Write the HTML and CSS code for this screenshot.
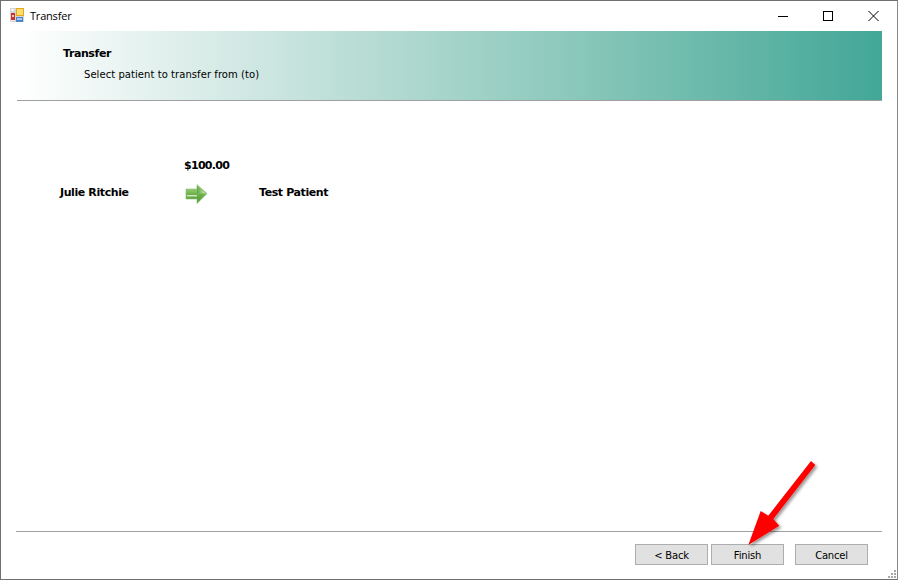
FILE: index.html
```html
<!DOCTYPE html>
<html lang="en">
<head>
<meta charset="utf-8">
<title>Transfer</title>
<link rel="stylesheet" href="styles.css">
</head>
<body>
<div class="window">
  <div class="titlebar">
    <svg class="app-icon" width="14" height="14" viewBox="0 0 14 14">
      <rect x="0" y="0" width="14" height="14" fill="#d4d4d4"/>
      <rect x="1" y="1" width="3" height="2" fill="#f4f4f4"/>
      <rect x="1" y="10" width="3" height="3" fill="#f4f4f4"/>
      <rect x="1" y="5" width="4" height="7" fill="#c8322a"/>
      <rect x="2" y="7" width="2" height="2" fill="#f2c9b8"/>
      <rect x="6" y="0" width="8" height="8" fill="#e8a818"/>
      <rect x="7" y="1" width="6" height="6" fill="#fbdc72"/>
      <rect x="6" y="9" width="7" height="5" fill="#4f83cc"/>
      <rect x="7" y="10" width="5" height="2" fill="#a9c8ee"/>
    </svg>
    <span class="title">Transfer</span>
    <div class="controls">
      <svg width="12" height="12" viewBox="0 0 12 12"><path d="M1 6.5h10" stroke="#000" fill="none"/></svg>
      <svg width="12" height="12" viewBox="0 0 12 12"><rect x="1.5" y="1.5" width="9" height="9" stroke="#000" fill="none"/></svg>
      <svg width="12" height="12" viewBox="0 0 12 12"><path d="M1.5 1l10 10M11.5 1l-10 10" stroke="#000" fill="none"/></svg>
    </div>
  </div>
  <div class="banner">
    <div class="banner-title">Transfer</div>
    <div class="banner-sub">Select patient to transfer from (to)</div>
  </div>
  <main class="content">
    <div class="transfer">
      <span></span>
      <span class="amount">$100.00</span>
      <span></span>
      <span class="name from">Julie Ritchie</span>
      <svg class="arrow" width="23" height="20" viewBox="0 0 23 20">
        <defs>
          <linearGradient id="ag" x1="0" y1="0" x2="0" y2="1">
            <stop offset="0" stop-color="#b5dc98"/>
            <stop offset="0.5" stop-color="#6fb24d"/>
            <stop offset="1" stop-color="#4f9638"/>
          </linearGradient>
          <linearGradient id="ah" x1="0" y1="0" x2="1" y2="0">
            <stop offset="0" stop-color="#5fa83f"/>
            <stop offset="1" stop-color="#cfe8bd"/>
          </linearGradient>
        </defs>
        <path d="M1 5h11V0.5L22 9.5 12 19.5V15H1z" fill="url(#ag)" stroke="#8dbf72" stroke-width="0.6"/>
        <path d="M12 1.5L21 9.5H12z" fill="url(#ah)"/>
        <rect x="2" y="11" width="10" height="1.5" fill="#cbe8b6"/>
      </svg>
      <span class="name">Test Patient</span>
    </div>
  </main>
  <footer class="footer">
    <button class="btn">&lt; Back</button>
    <button class="btn">Finish</button>
    <button class="btn cancel">Cancel</button>
    <svg class="grip" width="10" height="10" viewBox="0 0 10 10" fill="#a8a8a8">
      <rect x="7" y="1" width="2" height="2"/><rect x="4" y="4" width="2" height="2"/><rect x="7" y="4" width="2" height="2"/>
      <rect x="1" y="7" width="2" height="2"/><rect x="4" y="7" width="2" height="2"/><rect x="7" y="7" width="2" height="2"/>
    </svg>
  </footer>
  <svg class="callout" width="80" height="95" viewBox="0 0 80 95">
    <defs>
      <filter id="sh" x="-20%" y="-20%" width="150%" height="150%">
        <feDropShadow dx="2" dy="2" stdDeviation="1.5" flood-color="#000" flood-opacity="0.4"/>
      </filter>
    </defs>
    <path d="M65 2L69.3 6 27.3 60 33.3 66.7 2.3 86 14.7 52 22.3 56.7z" fill="#ff0000" filter="url(#sh)"/>
  </svg>
</div>
</body>
</html>
```
FILE: styles.css
```css
* { box-sizing: border-box; }
html, body { margin: 0; padding: 0; }
body { width: 898px; height: 580px; overflow: hidden; background: #fff; }
.window {
  position: relative;
  width: 898px;
  height: 580px;
  display: flex;
  flex-direction: column;
  background: #fff;
  border: 1px solid #6f6f6f;
  border-right-color: #8a8a8a;
  font-family: "DejaVu Sans", sans-serif;
  color: #000;
}
.titlebar {
  height: 30px;
  flex: none;
  display: flex;
  align-items: center;
  padding-left: 9px;
}
.app-icon { flex: none; margin-top: -2px; }
.title { margin: -2px 0 0 6px; font: 11px "Open Sans", "Noto Sans", sans-serif; letter-spacing: -0.2px; }
.controls {
  margin-left: auto;
  display: flex;
  gap: 33px;
  padding-right: 18px;
  align-items: center;
}
.banner {
  flex: none;
  margin: 0 15px 0 16px;
  height: 70px;
  padding: 16px 0 0 46px;
  background: linear-gradient(90deg, #fff 0%, #c5e2dc 33%, #8fcabd 62%, #42a797 100%);
  border-bottom: 1px solid #a0a0a0;
}
.banner-title { font: bold 11px/13px "DejaVu Sans", sans-serif; letter-spacing: -0.4px; }
.banner-sub { font: 10px/13px "DejaVu Sans", sans-serif; letter-spacing: 0.06px; margin: 8px 0 0 21px; }
.content { flex: 1; padding: 56px 0 0 58px; }
.transfer {
  display: grid;
  grid-template-columns: 125px 75px auto;
  grid-template-rows: 16px 38px;
  justify-content: start;
  align-items: center;
  font: bold 11px/13px "DejaVu Sans", sans-serif;
  letter-spacing: -0.4px;
}
.amount { letter-spacing: -0.7px; }
.from { margin-left: 1px; }
.arrow { margin-left: 1px; margin-top: 3px; }
.footer {
  position: relative;
  flex: none;
  height: 48px;
  margin: 0 15px 0 15px;
  border-top: 1px solid #a0a0a0;
  display: flex;
  align-items: flex-start;
  padding: 12px 14px 0 0;
  justify-content: flex-end;
  gap: 3px;
}
.btn {
  width: 73px;
  height: 21px;
  padding: 1px 0 0;
  background: #e1e1e1;
  border: 1px solid #adadad;
  font: 10px "DejaVu Sans", sans-serif;
  letter-spacing: -0.2px;
  color: #000;
}
.cancel { margin-left: 8px; }
.grip { position: absolute; right: -15px; bottom: 0; }
.callout { position: absolute; left: 745px; top: 458px; pointer-events: none; }
```
